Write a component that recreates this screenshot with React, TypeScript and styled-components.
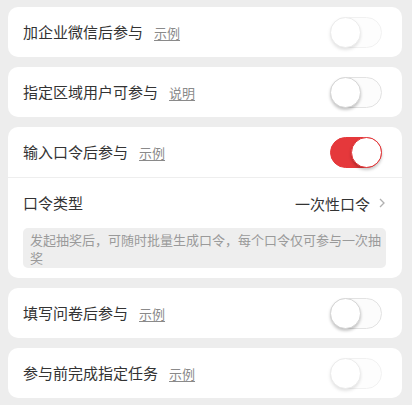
import React from "react";
import styled, { createGlobalStyle } from "styled-components";

const Global = createGlobalStyle`
  html, body { margin: 0; padding: 0; background: #ededed; }
  body { font-family: "Noto Sans CJK SC", "Noto Sans", sans-serif; color: #333; }
`;

const Page = styled.div`
  display: flex;
  flex-direction: column;
  gap: 10px;
  padding: 7px 10px 8px 8px;
`;

const Card = styled.div`
  background: #fff;
  border-radius: 10px;
  display: flex;
  flex-direction: column;
`;

const Row = styled.div<{ $divider?: boolean }>`
  height: 50px;
  display: flex;
  align-items: center;
  padding: 0 20px 0 15px;
  border-bottom: ${(p) => (p.$divider ? "1px solid #eeeeee" : "none")};
  margin-left: ${(p) => (p.$divider ? "0" : "0")};
`;

const Title = styled.span`
  font-size: 15px;
  color: #333;
  line-height: 20px;
`;

const Link = styled.span`
  font-size: 13px;
  color: #8a8a8a;
  text-decoration: underline;
  text-underline-offset: 2px;
  margin-left: 11px;
`;

const Spacer = styled.div`
  flex: 1;
`;

const Track = styled.div<{ $on?: boolean; $faded?: boolean }>`
  position: relative;
  width: 52px;
  height: 31px;
  border-radius: 16px;
  box-sizing: border-box;
  background: ${(p) => (p.$on ? "#e5383b" : "#fcfcfc")};
  border: 1px solid ${(p) => (p.$on ? "#e5383b" : "#e2e2e2")};
  opacity: ${(p) => (p.$faded ? 0.45 : 1)};
`;

const Knob = styled.div<{ $on?: boolean }>`
  position: absolute;
  top: -1px;
  left: ${(p) => (p.$on ? "20px" : "-1px")};
  width: 31px;
  height: 31px;
  border-radius: 50%;
  background: #fff;
  box-sizing: border-box;
  border: 1px solid ${(p) => (p.$on ? "#e5383b" : "#d6d6d6")};
  box-shadow: 0 2px 3px rgba(0, 0, 0, 0.22);
`;

const Value = styled.span`
  font-size: 15px;
  color: #333;
`;

const Chevron = styled.svg`
  margin-left: 8px;
  margin-right: -4px;
`;

const Hint = styled.div`
  margin: 0 16px 10px 15px;
  padding: 3px 4px 1px 7px;
  background: #eeeeee;
  border-radius: 5px;
  font-size: 13px;
  line-height: 18px;
  color: #9a9a9a;
`;

function Toggle({ on, faded }: { on?: boolean; faded?: boolean }) {
  return (
    <Track $on={on} $faded={faded}>
      <Knob $on={on} />
    </Track>
  );
}

function SimpleCard({ title, link, on, faded }: { title: string; link: string; on?: boolean; faded?: boolean }) {
  return (
    <Card>
      <Row>
        <Title>{title}</Title>
        <Link>{link}</Link>
        <Spacer />
        <Toggle on={on} faded={faded} />
      </Row>
    </Card>
  );
}

export default function App() {
  return (
    <>
      <Global />
      <Page>
        <SimpleCard title="加企业微信后参与" link="示例" faded />
        <SimpleCard title="指定区域用户可参与" link="说明" />
        <Card>
          <Row $divider>
            <Title>输入口令后参与</Title>
            <Link>示例</Link>
            <Spacer />
            <Toggle on />
          </Row>
          <Row>
            <Title>口令类型</Title>
            <Spacer />
            <Value>一次性口令</Value>
            <Chevron width="8" height="12" viewBox="0 0 8 12">
              <path d="M2 2 L6 6 L2 10" fill="none" stroke="#b0b0b0" strokeWidth="1.3" />
            </Chevron>
          </Row>
          <Hint>发起抽奖后，可随时批量生成口令，每个口令仅可参与一次抽奖</Hint>
        </Card>
        <SimpleCard title="填写问卷后参与" link="示例" />
        <SimpleCard title="参与前完成指定任务" link="示例" faded />
      </Page>
    </>
  );
}
